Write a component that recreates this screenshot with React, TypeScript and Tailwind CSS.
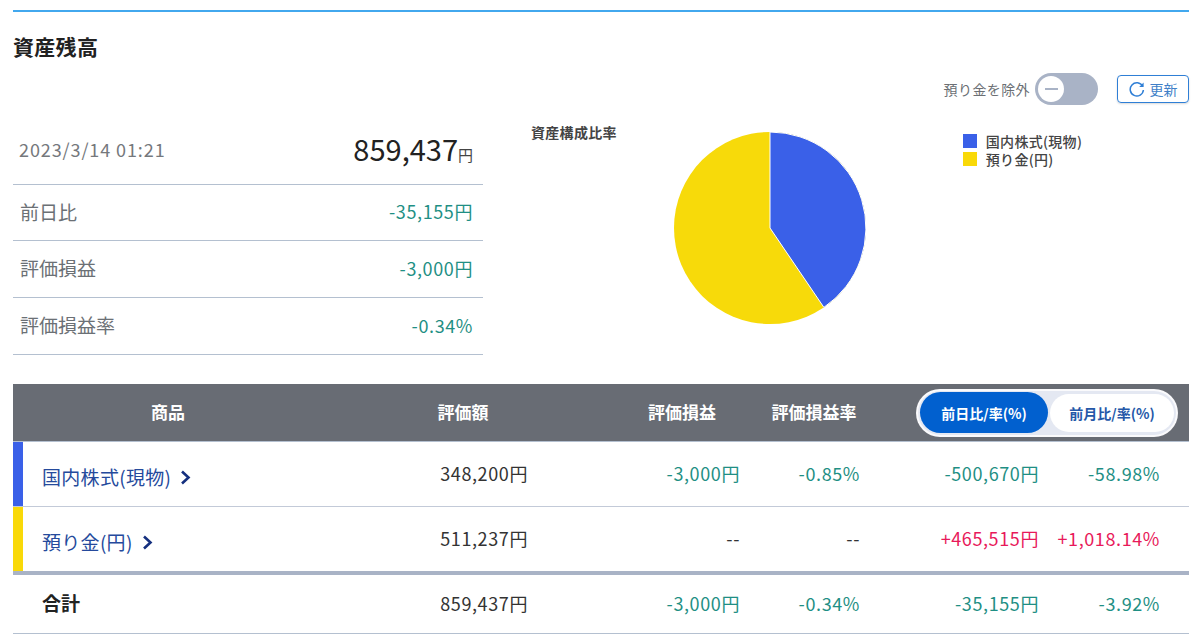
import React from "react";

const FONT = "font-['Noto_Sans_CJK_JP','Noto_Sans',sans-serif]";
const GREEN = "text-[#1f8f84]";
const RED = "text-[#e8195a]";

function Stat({ label, value, h }: { label: string; value: string; h: string }) {
  return (
    <div className={`flex ${h} items-center justify-between border-b border-[#b4c0d0] pb-[3px] pl-[7px] pr-[10px]`}>
      <span className="text-[19px] text-[#6b7075]">{label}</span>
      <span className={`text-[18px] tracking-[0.6px] ${GREEN}`}>{value}</span>
    </div>
  );
}

function Chevron() {
  return (
    <svg width="11" height="15" viewBox="0 0 11 15" className="ml-[9px] mt-[3px]" fill="none">
      <path d="M2 1.5 L8.5 7.5 L2 13.5" stroke="#15307f" strokeWidth="2.6" />
    </svg>
  );
}

function Row({
  bar,
  name,
  cells,
  h,
  link = true,
}: {
  bar?: string;
  name: string;
  cells: { t: string; c: string }[];
  h: string;
  link?: boolean;
}) {
  return (
    <div className={`grid grid-cols-[310px_205px_212px_120px_179px_121px] items-center ${h}`}>
      <div className="flex h-full items-center">
        <div className={`h-full w-[10px] ${bar ?? "bg-transparent"}`} />
        {link ? (
          <div className="ml-[19px] mt-[4px] flex items-center text-[19px] tracking-[0.3px] text-[#254a9c]">
            {name}
            <Chevron />
          </div>
        ) : (
          <div className="mb-[3px] ml-[19px] text-[19px] font-bold text-[#222]">{name}</div>
        )}
      </div>
      {cells.map((x, i) => (
        <div key={i} className={`mb-[3px] text-right text-[18px] tracking-[0.6px] ${x.c}`}>
          {x.t}
        </div>
      ))}
    </div>
  );
}

export default function App() {
  const ink = "text-[#333]";
  return (
    <div className={`${FONT} h-[644px] w-[1200px] overflow-hidden bg-white px-[13px] pr-[11px] pt-[10px] leading-none`}>
      <div className="border-t-2 border-[#42a8ee]" />
      <h1 className="mt-[21px] text-[21px] font-bold leading-[26px] tracking-[0.3px] text-[#222]">資産残高</h1>

      <div className="mt-[14px] flex h-[32px] items-center justify-end">
        <span className="mr-[5px] text-[14px] tracking-[0.4px] text-[#6b6f74]">預り金を除外</span>
        <div className="flex h-[32px] w-[63px] items-center rounded-full bg-[#a9b3c6] pl-[3px]">
          <div className="flex h-[26px] w-[26px] items-center justify-center rounded-full bg-white">
            <div className="h-[2px] w-[13px] bg-[#a9b3c6]" />
          </div>
        </div>
        <div className="ml-[19px] flex h-[28px] w-[72px] items-center justify-center rounded-[4px] border border-[#2f7fd6] text-[14px] text-[#3f7fc8] shadow-[0_1px_2px_rgba(0,0,0,0.15)]">
          <svg width="16" height="16" viewBox="0 0 16 16" className="mr-[5px]" fill="none">
            <path d="M13.6 5.2A6.6 6.6 0 1 0 14.4 9" stroke="#2f7fd6" strokeWidth="1.5" />
            <path d="M14.6 1.6V6H10.2Z" fill="#2f7fd6" />
          </svg>
          更新
        </div>
      </div>

      <div className="flex h-[279px] items-start">
        <div className="mt-[8px] w-[470px]">
          <div className="flex h-[72px] items-center justify-between border-b border-[#b4c0d0] pl-[6px] pr-[10px]">
            <span className="text-[18px] tracking-[0.9px] text-[#75787c]">2023/3/14 01:21</span>
            <span className="flex items-baseline text-[#222]">
              <span className="text-[29px]">859,437</span>
              <span className="text-[15px] text-[#444]">円</span>
            </span>
          </div>
          <Stat h="h-[56px]" label="前日比" value="-35,155円" />
          <Stat h="h-[57px]" label="評価損益" value="-3,000円" />
          <Stat h="h-[57px]" label="評価損益率" value="-0.34%" />
        </div>

        <div className="ml-[48px] mt-[19px] text-[14px] font-bold leading-[16px] tracking-[0.3px] text-[#444]">資産構成比率</div>

        <svg width="194" height="194" viewBox="0 0 194 194" className="ml-[56px] mt-[26px] shrink-0">
          <circle cx="97" cy="97" r="96" fill="#f7da0a" />
          <path d="M97 97 L97 1 A96 96 0 0 1 150.9 176.4 Z" fill="#3a60e8" stroke="#fff" strokeWidth="1" />
        </svg>

        <div className="ml-[96px] mt-[27px] text-[14px] font-medium tracking-[0.3px] text-[#444]">
          <div className="flex h-[18px] items-center">
            <span className="mr-[9px] h-[14px] w-[14px] bg-[#3a60e8]" />
            国内株式(現物)
          </div>
          <div className="flex h-[18px] items-center">
            <span className="mr-[9px] h-[14px] w-[14px] bg-[#f9d908]" />
            預り金(円)
          </div>
        </div>
      </div>

      <div className="flex h-[58px] items-center border-b border-[#b4c0d0] bg-[#686c74] text-[17px] font-bold text-white">
        <div className="mb-[3px] w-[310px] text-center">商品</div>
        <div className="mb-[3px] w-[280px] text-center">評価額</div>
        <div className="mb-[3px] w-[158px] text-center">評価損益</div>
        <div className="mb-[3px] w-[106px] text-center">評価損益率</div>
        <div className="ml-[49px] flex h-[48px] w-[262px] items-center rounded-full border-2 border-white/80 bg-[#e4e8f2] pl-[2px] pr-[2px] text-[14px]">
          <div className="flex h-[41px] w-[129px] items-center justify-center rounded-full bg-[#0160cf]">前日比/率(%)</div>
          <div className="ml-[2px] flex h-[38px] w-[125px] items-center justify-center rounded-full bg-white text-[#2558a8]">前月比/率(%)</div>
        </div>
      </div>

      <div className="border-b border-[#c3cad8]">
        <Row
          h="h-[64px]"
          bar="bg-[#3a60e8]"
          name="国内株式(現物)"
          cells={[
            { t: "348,200円", c: ink },
            { t: "-3,000円", c: GREEN },
            { t: "-0.85%", c: GREEN },
            { t: "-500,670円", c: GREEN },
            { t: "-58.98%", c: GREEN },
          ]}
        />
      </div>
      <Row
        h="h-[64px]"
        bar="bg-[#f9d908]"
        name="預り金(円)"
        cells={[
          { t: "511,237円", c: ink },
          { t: "--", c: ink },
          { t: "--", c: ink },
          { t: "+465,515円", c: RED },
          { t: "+1,018.14%", c: RED },
        ]}
      />
      <div className="h-[4px] bg-[#a9b3c6]" />
      <div className="border-b border-[#b4c0d0]">
        <Row
          h="h-[58px]"
          link={false}
          name="合計"
          cells={[
            { t: "859,437円", c: ink },
            { t: "-3,000円", c: GREEN },
            { t: "-0.34%", c: GREEN },
            { t: "-35,155円", c: GREEN },
            { t: "-3.92%", c: GREEN },
          ]}
        />
      </div>
    </div>
  );
}
